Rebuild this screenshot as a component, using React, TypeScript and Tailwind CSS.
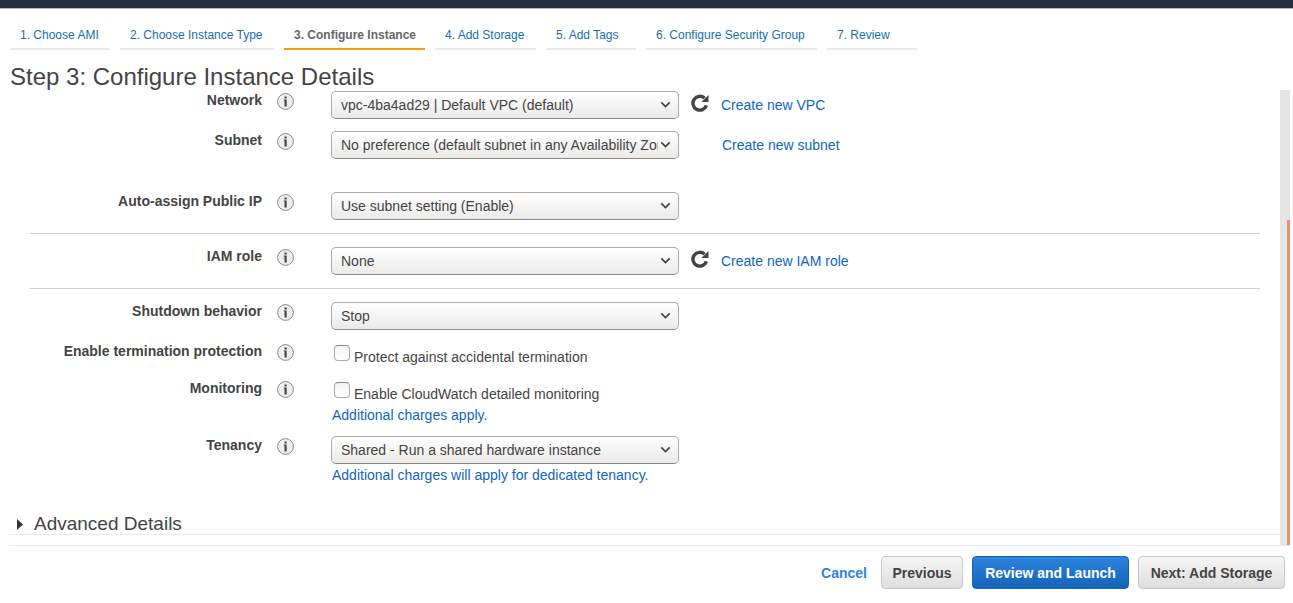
import { ReactNode } from "react";
import clsx from "clsx";

const STEPS = [
  { label: "1. Choose AMI", width: "w-[100px]" },
  { label: "2. Choose Instance Type", width: "w-[154px]" },
  { label: "3. Configure Instance", width: "w-[141px]", active: true },
  { label: "4. Add Storage", width: "w-[101px]" },
  { label: "5. Add Tags", width: "w-[90px]" },
  { label: "6. Configure Security Group", width: "w-[171px]" },
  { label: "7. Review", width: "w-[90px]" },
];

export default function App() {
  return (
    <div className="bg-white text-[#444] text-sm font-['Liberation_Sans',Arial,sans-serif]">
      <div className="h-[9px] bg-[#232f3e] border-b border-[#b4b8bd]" />
      <Steps />
      <h1 className="px-[10px] pt-3 h-10 text-2xl leading-[30px] whitespace-nowrap">
        Step 3: Configure Instance Details
      </h1>
      <main className="flex pr-[3px]">
        <div className="grow min-w-0 pt-px">
          <InstanceForm />
          <AdvancedDetails />
        </div>
        <div className="w-[10px] shrink-0 bg-[#e5e5e5] flex flex-col items-end pt-[130px]">
          <div className="w-[3px] grow bg-[#f08f6b]" />
        </div>
      </main>
      <Footer />
    </div>
  );
}

function Steps() {
  return (
    <nav className="flex gap-[10px] px-[10px] pt-4">
      {STEPS.map((step) => (
        <a
          key={step.label}
          href="#"
          aria-current={step.active ? "step" : undefined}
          className={clsx(
            "h-[25px] px-[10px] border-b-2 text-xs leading-5 whitespace-nowrap",
            step.width,
            step.active
              ? "border-[#ff9913] text-[#666] font-bold"
              : "border-[#eaeaea] text-[#146eb4]"
          )}
        >
          {step.label}
        </a>
      ))}
    </nav>
  );
}

function InstanceForm() {
  return (
    <form>
      <Row id="network" label="Network" className="mb-3">
        <div className="flex items-center">
          <Select id="network" value="vpc-4ba4ad29 | Default VPC (default)" />
          <RefreshButton />
          <Link>Create new VPC</Link>
        </div>
      </Row>
      <Row id="subnet" label="Subnet" className="mb-[33px]">
        <div className="flex items-center">
          <Select
            id="subnet"
            value="No preference (default subnet in any Availability Zone)"
          />
          <Link className="ml-[43px]">Create new subnet</Link>
        </div>
      </Row>
      <Row id="public-ip" label="Auto-assign Public IP">
        <Select id="public-ip" value="Use subnet setting (Enable)" />
      </Row>
      <Divider />
      <Row id="iam-role" label="IAM role">
        <div className="flex items-center">
          <Select id="iam-role" value="None" />
          <RefreshButton />
          <Link>Create new IAM role</Link>
        </div>
      </Row>
      <Divider />
      <Row id="shutdown" label="Shutdown behavior" className="mb-3">
        <Select id="shutdown" value="Stop" />
      </Row>
      <Row id="termination" label="Enable termination protection" className="mb-3">
        <Checkbox id="termination" label="Protect against accidental termination" />
      </Row>
      <Row id="monitoring" label="Monitoring" className="mb-[10px]">
        <Checkbox id="monitoring" label="Enable CloudWatch detailed monitoring" />
        <Link className="block ml-px">Additional charges apply.</Link>
      </Row>
      <Row id="tenancy" label="Tenancy">
        <Select id="tenancy" value="Shared - Run a shared hardware instance" />
        <Link className="block ml-px">
          Additional charges will apply for dedicated tenancy.
        </Link>
      </Row>
    </form>
  );
}

function Row(props: {
  id: string;
  label: string;
  className?: string;
  children: ReactNode;
}) {
  return (
    <div className={clsx("flex items-start", props.className)}>
      <label
        htmlFor={props.id}
        className="w-[262px] shrink-0 text-right font-bold leading-[18px]"
      >
        {props.label}
      </label>
      <button
        type="button"
        aria-label={`About ${props.label}`}
        className="mt-[2px] ml-[15px] mr-[37px] shrink-0"
      >
        <InfoIcon />
      </button>
      <div>{props.children}</div>
    </div>
  );
}

function Select(props: { id: string; value: string }) {
  return (
    <div className="relative w-[348px]">
      <select
        id={props.id}
        className="block w-full h-7 pl-[9px] pr-5 appearance-none rounded-[5px] border border-[#aaa] border-b-[#888] bg-linear-to-b from-white to-[#ebeae9] text-sm leading-5 text-[#444]"
      >
        <option>{props.value}</option>
      </select>
      <svg
        className="absolute right-2 top-[9px] pointer-events-none"
        width="11"
        height="9"
        viewBox="0 0 11 9"
        fill="none"
        stroke="#444"
        strokeWidth="1.7"
      >
        <path d="M1.3 2.4l4.2 4.1 4.2-4.1" />
      </svg>
    </div>
  );
}

function Checkbox(props: { id: string; label: string }) {
  return (
    <div className="flex items-start h-[25px] pl-[3px]">
      <input
        id={props.id}
        type="checkbox"
        className="mt-[3px] mr-1 size-4 appearance-none rounded border border-[#aaa] border-t-[#888] bg-linear-to-b from-[#f5f5f5] to-white"
      />
      <label htmlFor={props.id} className="pt-[5px] leading-5">
        {props.label}
      </label>
    </div>
  );
}

function Link(props: { className?: string; children: ReactNode }) {
  return (
    <a
      href="#"
      className={clsx("text-[#1166bb] leading-[22px] whitespace-nowrap", props.className)}
    >
      {props.children}
    </a>
  );
}

function Divider() {
  return <hr className="my-[13px] ml-[30px] mr-5 border-[#ccc]" />;
}

function RefreshButton() {
  return (
    <button type="button" aria-label="Refresh" className="mx-3 pb-1">
      <svg className="block" width="18" height="18" viewBox="0 0 18 18">
        <path
          d="M13.6 4.2A6.9 6.9 0 1 0 15.4 11.4"
          fill="none"
          stroke="#444"
          strokeWidth="3.4"
        />
        <path d="M17.5 1v7h-7z" fill="#444" />
      </svg>
    </button>
  );
}

function InfoIcon() {
  return (
    <svg className="block" width="17" height="17" viewBox="0 0 17 17">
      <circle cx="8.5" cy="8.5" r="7.9" fill="#eee" stroke="#888" />
      <path d="M7.5 3.5h2.2v2H7.5zM6.8 6.5h2.9V13.5H7.5V7.5h-.7z" fill="#444" />
    </svg>
  );
}

function AdvancedDetails() {
  return (
    <div className="ml-[10px] mt-7 mb-[10px] border-b border-[#eaeaea]">
      <button
        type="button"
        className="flex items-center h-5 pl-[7px] text-[19px] leading-5"
      >
        <svg className="mr-[11px]" width="6" height="11" viewBox="0 0 6 11">
          <path d="M0 0l6 5.5L0 11z" fill="#333" />
        </svg>
        Advanced Details
      </button>
    </div>
  );
}

function Footer() {
  return (
    <footer className="ml-[10px] mr-[3px] pt-[10px] pr-[5px] border-t border-[#eaeaea] flex justify-end items-center gap-[9px] font-bold">
      <button type="button" className="mr-[5px] text-[#2e83dc]">
        Cancel
      </button>
      <FooterButton className="min-w-[82px]">Previous</FooterButton>
      <FooterButton className="min-w-[157px]" primary>
        Review and Launch
      </FooterButton>
      <FooterButton className="min-w-[147px]">Next: Add Storage</FooterButton>
    </footer>
  );
}

function FooterButton(props: {
  primary?: boolean;
  className?: string;
  children: ReactNode;
}) {
  return (
    <button
      type="button"
      className={clsx(
        "h-[33px] px-[10px] rounded border whitespace-nowrap",
        props.primary
          ? "border-[#1166bb] bg-linear-to-b from-[#2e83dc] to-[#1464b8] text-white"
          : "border-[#c8c8c8] bg-linear-to-b from-[#f5f5f5] to-[#dfdfdf]",
        props.className
      )}
    >
      {props.children}
    </button>
  );
}
